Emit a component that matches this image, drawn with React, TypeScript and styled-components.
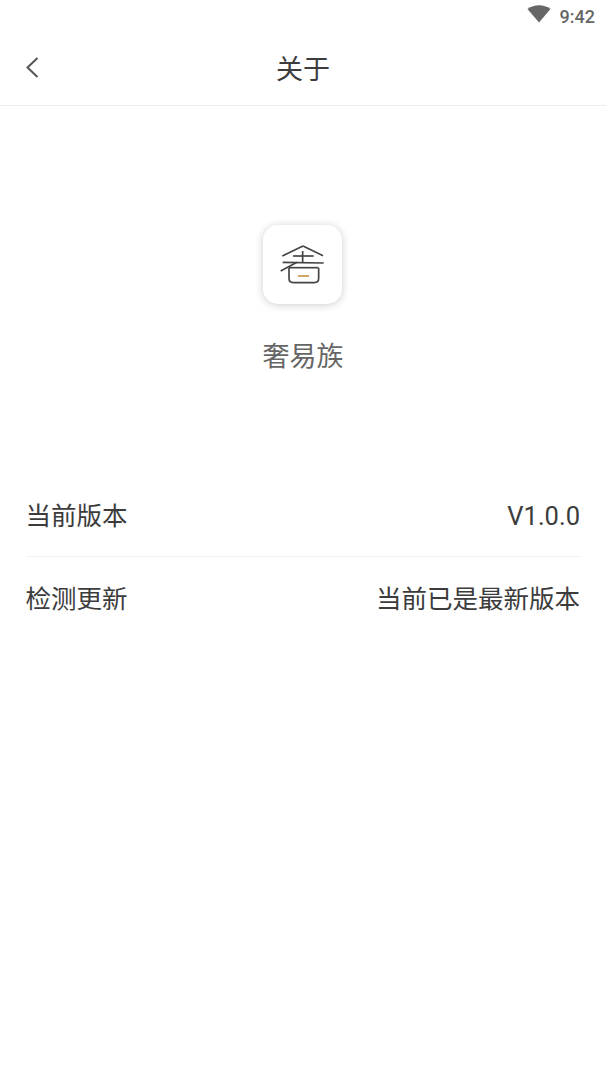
import React from "react";
import styled, { createGlobalStyle } from "styled-components";

const GlobalStyle = createGlobalStyle`
  html, body {
    margin: 0;
    padding: 0;
    background: #fff;
  }
  body {
    font-family: "Roboto", "Noto Sans CJK SC", sans-serif;
  }
`;

const App = () => (
  <Page>
    <GlobalStyle />
    <StatusBar>
      <WifiIcon width="24" height="18" viewBox="0 0 24 18">
        <path d="M0.5 4 C7 -1 17 -1 23.5 4 L12 17.5 Z" fill="#666" />
      </WifiIcon>
      <Clock>9:42</Clock>
    </StatusBar>
    <NavBar>
      <BackButton>
        <svg width="14" height="24" viewBox="0 0 14 24" fill="none">
          <path d="M12.5 2 L2.5 11.5 L12.5 21" stroke="#555" strokeWidth="2" />
        </svg>
      </BackButton>
      <NavTitle>关于</NavTitle>
    </NavBar>
    <Brand>
      <LogoCard>
        {/* traced from the reference, units are 1/3 px */}
        <svg width="79" height="79" viewBox="40 30 237 237" fill="none">
          <g stroke="#444" strokeWidth="5">
            <path d="M160 93 L98 123 M160 93 L220 122" />
            <path d="M130 123 H192" />
            <path d="M159 108 V142" />
            <path d="M99 142 L222 144" />
            <path d="M142 142 L93 168" />
            <path d="M118 158 H206" />
            <path d="M118 158 V190 Q118 203 131 203 H194 Q207 203 207 190 V158" />
          </g>
          <path d="M145 183 H178" stroke="#d0a765" strokeWidth="6" />
        </svg>
      </LogoCard>
      <AppName>奢易族</AppName>
    </Brand>
    <InfoList>
      <InfoRow>
        <span>当前版本</span>
        <span>V1.0.0</span>
      </InfoRow>
      <InfoRow>
        <span>检测更新</span>
        <span>当前已是最新版本</span>
      </InfoRow>
    </InfoList>
  </Page>
);

export default App;

const Page = styled.div`
  width: 606px;
  height: 1080px;
  display: flex;
  flex-direction: column;
  background: #fff;
  overflow: hidden;
`;

const StatusBar = styled.div`
  height: 32px;
  padding-right: 11px;
  display: flex;
  align-items: center;
  justify-content: flex-end;
  gap: 9px;
`;

const WifiIcon = styled.svg`
  display: block;
  margin-top: -4px;
`;

const Clock = styled.span`
  font-size: 18px;
  font-weight: 500;
  color: #666;
`;

const NavBar = styled.div`
  height: 73px;
  padding: 0 26px;
  display: flex;
  align-items: center;
  justify-content: center;
  position: relative;
  border-bottom: 1px solid #eeeeee;
`;

const BackButton = styled.div`
  position: absolute;
  left: 25px;
  top: 24px;
  line-height: 0;
`;

const NavTitle = styled.div`
  font-size: 27px;
  color: #3c3c3c;
  margin-top: -2px;
`;

const Brand = styled.div`
  padding-top: 119px;
  display: flex;
  flex-direction: column;
  align-items: center;
`;

const LogoCard = styled.div`
  width: 79px;
  height: 79px;
  margin-right: 1px;
  border-radius: 15px;
  background: #fff;
  box-shadow: 0 1px 8px rgba(0, 0, 0, 0.2);
  line-height: 0;
`;

const AppName = styled.div`
  margin-top: 33px;
  font-size: 27px;
  line-height: 40px;
  color: #666;
`;

const InfoList = styled.div`
  margin: 98px 26px 0 25.5px;
`;

const InfoRow = styled.div`
  padding: 27px 0 24px;
  display: flex;
  align-items: center;
  justify-content: space-between;
  font-size: 25.5px;
  line-height: 30px;
  color: #3c3c3c;
  &:first-child {
    padding: 26px 0 25px;
  }
  & + & {
    border-top: 1px solid #f2f2f2;
  }
`;
